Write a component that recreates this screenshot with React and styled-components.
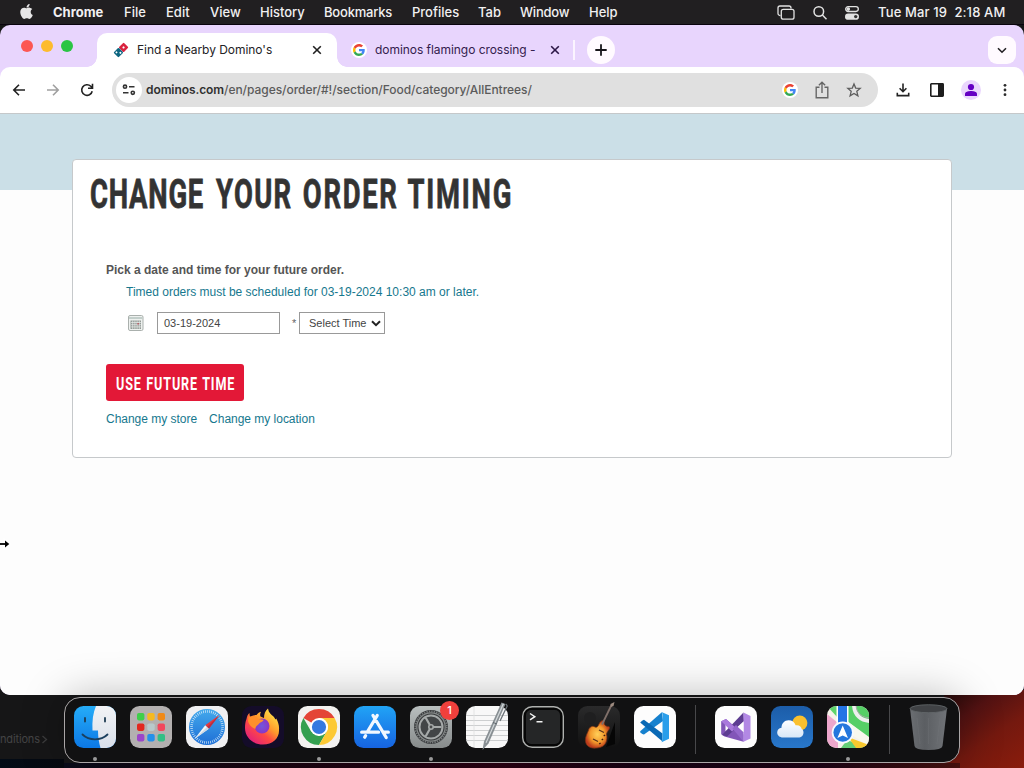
import React from 'react';
import styled, { createGlobalStyle } from 'styled-components';
import { FaApple } from 'react-icons/fa';

const Global = createGlobalStyle`
  *, *::before, *::after { box-sizing: border-box; }
  body { margin: 0; background: #121213; }
`;

const Screen = styled.div`
  position: relative;
  display: flex;
  flex-direction: column;
  width: 1024px;
  height: 768px;
  overflow: hidden;
  font-family: Inter, "Liberation Sans", sans-serif;
  background:
    linear-gradient(90deg, #020b16 0, #06090f 64px, transparent 64px) 0 759px / 100% 9px no-repeat,
    linear-gradient(90deg, transparent 64px, #090b1a 64px, #150713 180px, #1a0412 260px, #2c0113 500px, #190214 640px, #1e0316 820px, #4a110e 960px, transparent 960px) 0 763px / 100% 5px no-repeat,
    linear-gradient(145deg, #1d0807 0, #521212 30%, #74190f 60%, #8a1c0c 100%) 944px 690px / 80px 78px no-repeat,
    linear-gradient(#161617, #161617);
`;

/* ---------- menu bar ---------- */

const MenuBar = styled.header`
  display: flex;
  align-items: center;
  flex: 0 0 25px;
  padding: 0 0 1px 19px;
  background: #211f21;
  border-bottom: 1px solid #09030d;
  color: #f1f0f1;
  font-size: 13px;
`;
const AppleMark = styled(FaApple)`
  width: 15px;
  height: 17px;
  margin-right: 19px;
  color: #e7e6e7;
`;
const MenuItem = styled.span`
  flex: 0 0 ${p => p.$w}px;
  white-space: nowrap;
  font-weight: ${p => (p.$bold ? 700 : 500)};
  letter-spacing: ${p => p.$ls || 0}px;
`;
const MenuStatus = styled.div`
  display: flex;
  align-items: center;
  margin-left: auto;
  gap: 14px;
  padding-right: 19px;
  svg { margin-top: 2px; margin-left: -1px; margin-right: 1px; }
`;
const Clock = styled.span`
  width: 128px;
  margin-right: -1px;
  margin-left: 4px;
  white-space: pre;
  font-weight: 500;
  letter-spacing: 0.14px;
`;

/* ---------- browser window ---------- */

const Window = styled.main`
  display: flex;
  flex-direction: column;
  flex: 0 0 670px;
  overflow: hidden;
  border-radius: 10px;
  background: #e8d5fd;
`;
const TabStrip = styled.div`
  display: flex;
  align-items: flex-start;
  flex: 0 0 42px;
  padding: 8px 8px 0 21px;
`;
const Lights = styled.div`
  display: flex;
  gap: 8px;
  width: 76px;
  padding-top: 7px;
`;
const Light = styled.i`
  width: 12px;
  height: 12px;
  border-radius: 50%;
  background: ${p => p.$c};
`;
const Tab = styled.div`
  position: relative;
  display: flex;
  align-items: center;
  height: 34px;
  width: ${p => p.$w}px;
  padding: 0 ${p => (p.$active ? 15 : 13)}px 0 ${p => (p.$active ? 16 : 14)}px;
  border-radius: 10px 10px 0 0;
  background: ${p => (p.$active ? '#fff' : 'transparent')};
  color: ${p => (p.$active ? '#242225' : '#34204d')};
  font-size: 12px;
  &::before, &::after {
    content: ${p => (p.$active ? '""' : 'none')};
    position: absolute;
    bottom: 0;
    width: 10px;
    height: 10px;
  }
  &::before { left: -10px; background: radial-gradient(circle at 0 0, transparent 9.5px, #fff 10px); }
  &::after { right: -10px; background: radial-gradient(circle at 100% 0, transparent 9.5px, #fff 10px); }
`;
const TabTitle = styled.span`
  flex: 1;
  margin-left: 8px;
  padding-bottom: 2px;
  overflow: hidden;
  white-space: nowrap;
  letter-spacing: ${p => p.$ls}px;
`;
const TabRule = styled.i`
  width: 2px;
  height: 20px;
  margin: 7px 12px 0 0;
  background: #fbf4ff;
`;
const RoundButton = styled.span`
  display: grid;
  place-items: center;
  width: 28px;
  height: 28px;
  margin-top: 3px;
  margin-left: ${p => (p.$end ? 'auto' : 0)};
  border-radius: ${p => (p.$end ? 9 : 14)}px;
  background: #fffaff;
`;
const Toolbar = styled.div`
  display: flex;
  align-items: center;
  flex: 0 0 47px;
  padding: 0 9px;
  border-bottom: 1px solid #c5c8ca;
  border-radius: 10px 10px 0 0;
  background: #fff;
`;
const ToolIcon = styled.span`
  display: grid;
  place-items: center;
  flex: 0 0 20px;
  height: 20px;
  margin-right: ${p => p.$gap ?? 14}px;
`;
const Omnibox = styled.div`
  display: flex;
  align-items: center;
  flex: 0 0 766px;
  height: 34px;
  margin: 0 15px 0 1px;
  padding-left: 4px;
  border-radius: 17px;
  background: #e0e0e0;
`;
const SiteChip = styled.span`
  display: grid;
  place-items: center;
  width: 26px;
  height: 26px;
  margin-right: 4px;
  border-radius: 50%;
  background: #fff;
`;
const Url = styled.span`
  flex: 1;
  padding-bottom: 1px;
  color: #5b5b5b;
  font-size: 12px;
  font-weight: 500;
  letter-spacing: -0.045px;
  b { color: #303030; font-weight: 600; letter-spacing: -0.08px; }
`;

/* ---------- page ---------- */

const Page = styled.div`
  flex: 1;
  padding: 45px 72px 0;
  background: linear-gradient(#cbdfe7 0 76px, #fdfdfd 76px);
  font-family: "Liberation Sans", Arial, sans-serif;
  font-size: 12px;
`;
const Card = styled.section`
  height: 299px;
  padding: 17px 17px 0;
  border: 1px solid #c6c9cb;
  border-radius: 4px;
  background: #fff;
`;
const Heading = styled.h1`
  display: flex;
  width: 700px;
  height: 34px;
  margin: 0;
  color: #333;
  font: 700 41.5px/34px Roboto, sans-serif;
  -webkit-text-stroke: 0.8px #333;
  transform: scaleX(0.66);
  transform-origin: 0 50%;
  white-space: nowrap;
`;
const HeadingWord = styled.span`
  flex: 0 0 ${p => p.$w}px;
  letter-spacing: ${p => p.$ls}px;
`;
const Form = styled.div`
  display: flex;
  flex-direction: column;
  align-items: flex-start;
  padding: 51px 0 0 16px;
`;
const Lead = styled.p`
  height: 16px;
  margin: 0;
  color: #555;
  font-weight: 700;
  line-height: 16px;
`;
const Notice = styled.p`
  height: 16px;
  margin: 6px 0 0 20px;
  color: #16788e;
  line-height: 16px;
`;
const Fields = styled.div`
  display: flex;
  align-items: center;
  height: 22px;
  margin: 12px 0 0 22px;
  color: #444;
  font-size: 11px;
`;
const DateField = styled.span`
  width: 123px;
  height: 22px;
  margin-left: 13px;
  padding-left: 6px;
  border: 1px solid #999;
  line-height: 20px;
`;
const Star = styled.span`
  width: 7px;
  margin-left: 12px;
  color: #666;
`;
const TimeSelect = styled.span`
  display: flex;
  align-items: center;
  justify-content: space-between;
  width: 86px;
  height: 22px;
  padding: 0 3px 0 9px;
  border: 1px solid #999;
`;
const Submit = styled.button`
  width: 138px;
  height: 37px;
  margin: 30px 0 0;
  padding: 1px 0 0 10px;
  border: 0;
  border-radius: 3px;
  background: #e31837;
  color: #fff;
  text-align: left;
  span {
    display: block;
    font: 700 18px/37px Roboto, sans-serif;
    letter-spacing: 1.2px;
    word-spacing: 1px;
    white-space: nowrap;
    transform: scaleX(0.7);
    transform-origin: 0 50%;
  }
`;
const Links = styled.nav`
  display: flex;
  gap: 12px;
  margin-top: 10px;
  color: #16788e;
  line-height: 16px;
  letter-spacing: -0.02px;
`;

/* ---------- dock ---------- */

const DockArea = styled.footer`
  display: flex;
  align-items: flex-start;
  flex: 1;
  padding-top: 2px;
`;
const Backdrop = styled.span`
  display: flex;
  flex: 0 0 64px;
  align-items: center;
  padding-top: 35px;
  color: #444445;
  font-size: 11px;
  white-space: nowrap;
  letter-spacing: -0.15px;
  svg { flex: none; margin-left: 1px; }
`;
const Dock = styled.div`
  display: flex;
  align-items: flex-start;
  gap: 14px;
  width: 896px;
  height: 66px;
  padding: 8px 9px 0;
  border: 1px solid #aaa6a7;
  border-radius: 16px;
  background: #111112;
  box-shadow: 0 0 44px 0 rgba(0, 0, 0, 0.28);
  z-index: 1;
`;
const DockItem = styled.span`
  position: relative;
  flex: 0 0 42px;
  height: 42px;
  svg { display: block; overflow: visible; }
  &::after {
    content: ${p => (p.$running ? '""' : 'none')};
    position: absolute;
    left: 19px;
    top: 51px;
    width: 4px;
    height: 4px;
    border-radius: 50%;
    background: #9a9a9a;
  }
`;
const Badge = styled.em`
  position: absolute;
  top: -5px;
  right: -7px;
  width: 19px;
  height: 19px;
  border-radius: 50%;
  background: #f0403c;
  color: #fff;
  font: 500 11px/19px Inter, sans-serif;
  text-align: center;
`;
const DockRule = styled.i`
  flex: 0 0 1px;
  height: 49px;
  margin: -1px ${p => (p.$last ? '4px 0 6px' : '5px 0')};
  background: #48484a;
`;
const Cursor = styled.svg`
  position: absolute;
  left: 0;
  top: 537px;
`;

/* ---------- small icons ---------- */

const Close = ({ c }) => (
  <svg width="10" height="10" viewBox="0 0 10 10"><path d="M1.2 1.2 8.8 8.8M8.8 1.2 1.2 8.8" stroke={c} strokeWidth="1.6" /></svg>
);
const Google = ({ s = 14 }) => (
  <svg width={s} height={s} viewBox="0 0 48 48">
    <path fill="#EA4335" d="M24 9.5c3.54 0 6.71 1.22 9.21 3.6l6.85-6.85C35.9 2.38 30.47 0 24 0 14.62 0 6.51 5.38 2.56 13.22l7.98 6.19C12.43 13.72 17.74 9.5 24 9.5z" />
    <path fill="#4285F4" d="M46.98 24.55c0-1.57-.15-3.09-.38-4.55H24v9.02h12.94c-.58 2.96-2.26 5.48-4.78 7.18l7.73 6c4.51-4.18 7.09-10.36 7.09-17.65z" />
    <path fill="#FBBC05" d="M10.53 28.59c-.48-1.45-.76-2.99-.76-4.59s.27-3.14.76-4.59l-7.98-6.19C.92 16.46 0 20.12 0 24c0 3.88.92 7.54 2.56 10.78l7.97-6.19z" />
    <path fill="#34A853" d="M24 48c6.48 0 11.93-2.13 15.89-5.81l-7.73-6c-2.15 1.45-4.92 2.3-8.16 2.3-6.26 0-11.57-4.22-13.47-9.91l-7.98 6.19C6.51 42.62 14.62 48 24 48z" />
  </svg>
);
const GoogleTab = styled.span`
  display: grid;
  place-items: center;
  width: 16px;
  height: 16px;
  border-radius: 50%;
  background: #fff;
`;
const Domino = () => (
  <svg width="16" height="16" viewBox="0 0 16 16">
    <g transform="rotate(45 8 8)">
      <rect x="4.5" y="0.8" width="7" height="7.1" rx="1" fill="#d9233f" />
      <rect x="4.5" y="8.1" width="7" height="7.1" rx="1" fill="#0c6580" />
      <circle cx="8" cy="4.4" r="1.1" fill="#fff" />
      <circle cx="6.500" cy="12.900" r="1" fill="#fff" /><circle cx="9.600" cy="10.400" r="1" fill="#fff" />
    </g>
  </svg>
);
const Arrow = ({ c, flip }) => (
  <svg width="14" height="14" viewBox="0 0 14 14"><path transform={flip ? 'translate(14 0) scale(-1 1)' : undefined} d="M13 7H2.2M7 1.8 1.8 7 7 12.2" fill="none" stroke={c} strokeWidth="1.6" /></svg>
);

/* ---------- dock icons ---------- */

const Art = ({ children }) => <svg width="42" height="42" viewBox="0 0 42 42">{children}</svg>;
const Tile = ({ fill }) => <rect width="42" height="42" rx="9.5" fill={fill} />;
const Grad = ({ id, a, b }) => (
  <linearGradient id={id} x1="0" y1="0" x2="0" y2="1"><stop stopColor={a} /><stop offset="1" stopColor={b} /></linearGradient>
);

const Finder = () => (
  <Art>
    <defs><Grad id="fi" a="#25acf8" b="#0c78e5" /><Grad id="fw" a="#f2f3f6" b="#d9dfe9" /></defs>
    <Tile fill="url(#fi)" />
    <path d="M22 0H32.500A9.500 9.500 0 0 1 42 9.500V32.500A9.500 9.500 0 0 1 32.500 42H26.500C25 37 24 31 24 24.500H18.500C18 15 19 7 22 0Z" fill="url(#fw)" />
    <path d="M11 12v3.500M31 12v3.500" stroke="#1d3a52" strokeWidth="1.800" strokeLinecap="round" />
    <path d="M8.500 28.500C15 35 27 35 33.500 28.500" fill="none" stroke="#1b3f5e" strokeWidth="1.800" strokeLinecap="round" />
  </Art>
);
const Launchpad = () => {
  const colors = ['#3fcf4a', '#f5b921', '#f08a18', '#e2281f', '#b9c9cb', '#f2485d', '#9b46c9', '#2490ea', '#33bf85'];
  return (
    <Art>
      <Tile fill="#b3b0b0" />
      {colors.map((c, i) => <rect key={i} x={7 + (i % 3) * 10.3} y={7 + Math.floor(i / 3) * 10.5} width="7.400" height="7.400" rx="1.800" fill={c} />)}
    </Art>
  );
};
const Safari = () => (
  <Art>
    <defs><Grad id="sa" a="#43a9ec" b="#1e6fd6" /></defs>
    <Tile fill="#f0f0f2" />
    <circle cx="21" cy="21" r="18" fill="url(#sa)" />
    <circle cx="21" cy="21" r="15.500" fill="none" stroke="#d5e9f8" strokeWidth="2.600" strokeDasharray=".7 1.320" />
    <path d="M33.500 9 19.200 19.200 22.800 22.800Z" fill="#e8383c" />
    <path d="M8.500 33 19.200 19.200 22.800 22.800Z" fill="#f5f5f5" />
    <path d="M33.500 9 21 21 22.800 22.800Z" fill="#b82f45" />
    <path d="M8.500 33 21 21 22.800 22.800Z" fill="#ced9e4" />
  </Art>
);
const Firefox = () => (
  <Art>
    <defs>
      <linearGradient id="ff" x1=".85" y1=".1" x2=".2" y2=".9"><stop stopColor="#ffe045" /><stop offset=".4" stopColor="#ff9a2c" /><stop offset=".65" stopColor="#ff4a43" /><stop offset="1" stopColor="#e52475" /></linearGradient>
      <radialGradient id="fp"><stop stopColor="#7057dc" /><stop offset="1" stopColor="#8c35c4" /></radialGradient>
    </defs>
    <Tile fill="#140c29" />
    <path d="M4.500 13C5 10 6 8 7.500 7c0 2 .3 3 1 4 2-1.500 4-2 6-2 1-1.500 2.500-2.800 4.500-3.300-1 2-1 3.200-.5 4.800L22 12c0-4 1-7 4-9.500.5 4 3 6 5.500 8 1 1 1.500 2 1.800 3l1-1c2 4 3 7 2.700 11C37.500 32 31 38.500 21 38.500 10.500 38.500 3 31 3 22c0-3.500.4-6.500 1.500-9Z" fill="url(#ff)" />
    <circle cx="20" cy="20" r="7.500" fill="url(#fp)" />
    <path d="M6.500 11c4-1.500 7.500-.5 10 2l5 .8c0 2-3.500 2.500-4.500 4-1 1.500-3.500 2-3.500 5C10 22 7 19 6 15Z" fill="#ff8f2a" />
  </Art>
);
const Chrome = () => (
  <Art>
    <Tile fill="#f3f2f0" />
    <path d="M21 21 5.400 12A18 18 0 0 1 36.600 12H21Z" fill="#e44537" />
    <path d="M5.400 12A18 18 0 0 0 21 39L28.800 25.500 21 30 13.200 25.500Z" fill="#34a04f" />
    <path d="M36.600 12A18 18 0 0 1 21 39L28.800 25.500A9 9 0 0 0 21 12Z" fill="#fcc934" />
    <circle cx="21" cy="21" r="9" fill="#fff" />
    <circle cx="21" cy="21" r="7.100" fill="#3478e0" />
  </Art>
);
const AppStore = () => (
  <Art>
    <defs><Grad id="as" a="#21a4f6" b="#1663e0" /></defs>
    <Tile fill="url(#as)" />
    <g stroke="#f2f8ff" strokeWidth="3.300" strokeLinecap="round" fill="none">
      <path d="M19 9.500 32.200 31.500M23.200 9.500 13.600 25.500M11.600 29.700 10.700 31.200M7.700 26.200H24.500M29.500 26.200H34.300" />
    </g>
  </Art>
);
const Settings = () => (
  <Art>
    <defs><Grad id="se" a="#b9bfbf" b="#878b8b" /></defs>
    <Tile fill="url(#se)" />
    <circle cx="21" cy="21" r="17" fill="#393b3d" />
    <circle cx="21" cy="21" r="15.700" fill="none" stroke="#777b7c" strokeWidth="1.800" strokeDasharray="1.300 1.160" />
    <circle cx="21" cy="21" r="14.200" fill="none" stroke="#858989" strokeWidth="1.200" />
    <circle cx="21" cy="21" r="11.500" fill="#424547" stroke="#a5a9a9" strokeWidth="2" />
    <path d="M21 21H31.500M21 21 15.700 11.800M21 21 15.700 30.200" stroke="#a5a9a9" strokeWidth="2.200" />
    <circle cx="21" cy="21" r="3" fill="#a5a9a9" /><circle cx="21" cy="21" r="1.400" fill="#464849" />
  </Art>
);
const TextEdit = () => (
  <Art>
    <Tile fill="#f8f8f8" />
    <path d="M0 9.500H42M0 14.500H42M0 19.500H42M0 24.500H42M0 29.500H42M0 34.500H42" stroke="#c2c4c5" strokeWidth=".8" />
    <path d="M8 1V41" stroke="#dddede" strokeWidth=".8" />
    <path d="M35.500-3.500 39.500-2 22.500 37.500 16.500 44 18 35.500Z" fill="#888f93" />
    <path d="M36.800-2.500 38-2 20.500 37 19.500 36.500Z" fill="#d4d9db" />
    <path d="M40-2 41.200 0 34 15" fill="none" stroke="#6b7277" strokeWidth="1.300" />
    <path d="M27 16.500 31 18" stroke="#5d656a" />
  </Art>
);
const Terminal = () => (
  <Art>
    <rect x=".7" y=".7" width="40.600" height="40.600" rx="9.500" fill="#060606" stroke="#aeb0ae" strokeWidth="1.400" />
    <rect x="4" y="4" width="34" height="34" rx="5" fill="#252627" />
    <path d="M8 7.500 12.800 10.700 8 13.900M14.500 15.800H20.500" fill="none" stroke="#f4f4f4" strokeWidth="1.500" />
  </Art>
);
const Garage = () => (
  <Art>
    <defs>
      <radialGradient id="gb"><stop stopColor="#ffd05a" /><stop offset=".6" stopColor="#f39a2c" /><stop offset="1" stopColor="#bd3c1c" /></radialGradient>
      <Grad id="gt" a="#2a2a2b" b="#111" />
    </defs>
    <Tile fill="url(#gt)" />
    <circle cx="12" cy="12" r="6" fill="#1f1f20" /><path d="M37 16v22l-9 3" fill="#060606" />
    <path d="M11 22.500c2.500-2.600 4-2.600 6-1.500 2 .7 3-.5 4-3 1.500-3.500 4.500-4.500 5.500-2.500-1 3 1 5 4.500 5 2 2-1.500 4-2.500 7.500C30 34 28 41.500 19 42 11 43 6.500 39 7.500 32c1-4 2.500-6 3.500-9.500Z" fill="url(#gb)" stroke="#713013" strokeWidth=".7" />
    <path d="M24 18.500 33.500-1" stroke="#80706a" strokeWidth="1.800" />
    <path d="M32.800 1 32.500-2 36.500-4 35.500 0Z" fill="#9d8b80" />
    <path d="M15 33 20 35.500M21 24l5 2.500" stroke="#59321c" strokeWidth="1.300" />
    <path d="M24 33l.8 1M21.500 37l.8 1M26 29l.8 1" stroke="#401c10" strokeWidth="1.800" />
  </Art>
);
const VsCode = () => (
  <Art>
    <Tile fill="#fdfdfd" />
    <path d="M6.200 25.300 27.800 6.200 29 15 10 28.400Q8.800 28.600 6.300 26.500Z" fill="#1681ce" />
    <path d="M6.200 16.500Q8 14.400 10 13.700L28.500 27.500V35.500Z" fill="#0a69b5" />
    <path d="M27.500 6 35 9.300V32.700L27.500 36.200Q28.500 35 28.500 33V9Q28.500 7 27.500 6Z" fill="#2a9eea" />
  </Art>
);
const VisualStudio = () => (
  <Art>
    <Tile fill="#fdfdfd" />
    <path d="M6.200 15.200 11 13 28.500 28.500V35.700L9.500 30.500 6.200 28.300Z" fill="#8256b8" />
    <path d="M10.500 18 15.500 22 10.500 25.500Z" fill="#fdfdfd" />
    <path d="M7 29 28.500 6.500 29 15 12 30.500Z" fill="#5d3d91" />
    <path d="M6.200 15.200 11 13 21 22 17 25.500Z" fill="#a979dc" />
    <path d="M17.500 22.500 21 19 28.500 26V35.700Z" fill="#9468cb" />
    <path d="M28.500 6.500 35.500 10V32.500L28.500 35.700Z" fill="#b288e4" />
    <path d="M28.500 16V26L23 21Z" fill="#fdfdfd" />
  </Art>
);
const Weather = () => (
  <Art>
    <defs><Grad id="we" a="#1c5da9" b="#2877ca" /><Grad id="cl" a="#fff" b="#d7e7f7" /></defs>
    <Tile fill="url(#we)" />
    <circle cx="28.800" cy="17" r="7.600" fill="#fac02e" />
    <path d="M12 31.500C8.500 31.500 6.200 29.300 6.200 26.500 6.200 24 8 22.200 10.500 21.800 10.500 17.500 13.500 14.300 17.500 14.300 21 14.300 23.700 16.200 24.600 19.300 28.500 18.800 30.500 21 30.700 23 32 23.500 32.500 25 32.500 26.500 32.500 29.500 30.300 31.500 27.200 31.500Z" fill="url(#cl)" />
  </Art>
);
const Maps = () => (
  <Art>
    <defs><clipPath id="mc"><rect width="42" height="42" rx="9.5" /></clipPath></defs>
    <g clipPath="url(#mc)">
      <rect width="42" height="42" fill="#f5f2ea" />
      <path d="M21 0H42V32L20 15Z" fill="#56cf66" />
      <path d="M0 0H11V12Z" fill="#5ed46b" /><path d="M0 8 11 17V42H0Z" fill="#eda7cc" />
      <path d="M20 34 42 42H14Z" fill="#64ce77" /><path d="M20 15 42 31V40L19 25Z" fill="#f8f8ee" />
      <path d="M21 31 29 42H36L42 42V39Z" fill="#f8c82e" />
      <path d="M27-2C27 9 34 15 44 15" fill="none" stroke="#eee" strokeWidth="4" />
      <path d="M29-2C29 8 36 12 44 12" fill="none" stroke="#a4aaa5" strokeWidth="1" />
      <path d="M9.500 0H21.500V20H9.500Z" fill="#fff" /><path d="M11 0H20V20H11Z" fill="#2474e5" />
      <circle cx="15.700" cy="26.500" r="11" fill="#f7faff" /><circle cx="15.700" cy="26.500" r="9.300" fill="#2477dd" />
      <path d="M15.700 19.500 21 32 15.700 29.500 10.400 32Z" fill="#fff" />
    </g>
  </Art>
);
const Trash = () => (
  <Art>
    <defs><linearGradient id="tr"><stop stopColor="#6b6e72" /><stop offset=".4" stopColor="#5b5e62" /><stop offset="1" stopColor="#707377" /></linearGradient></defs>
    <path d="M2 2.500 6.500 40Q7 44 20.500 44T34.500 40L39 2.500Z" fill="url(#tr)" />
    <ellipse cx="20.500" cy="2.700" rx="18.500" ry="4" fill="#404245" stroke="#65696c" strokeWidth=".8" />
    <path d="M9 12 12 38M32 12 29 38M20.500 12V38" stroke="#777a7e" strokeWidth=".7" opacity=".4" />
  </Art>
);

const MENU = [['File', 42], ['Edit', 44], ['View', 50], ['History', 64], ['Bookmarks', 88, -0.2], ['Profiles', 66], ['Tab', 42], ['Window', 69, -0.2], ['Help', 40]];

export default function App() {
  return (
    <Screen>
      <Global />
      <MenuBar>
        <AppleMark />
        <MenuItem $w={71} $bold $ls={0}>Chrome</MenuItem>
        {MENU.map(([t, w, ls]) => <MenuItem key={t} $w={w} $ls={ls}>{t}</MenuItem>)}
        <MenuStatus>
          <svg width="18" height="16" viewBox="0 0 18 16" fill="none" stroke="#e2e2e2" strokeWidth="1.300"><path d="M3.500 10.500H3A2 2 0 0 1 1 8.500V3A2 2 0 0 1 3 1H12A2 2 0 0 1 14 3V3.500" /><rect x="4.300" y="4.300" width="12.700" height="9.900" rx="2" /></svg>
          <svg width="20" height="16" viewBox="0 0 20 16" fill="none" stroke="#e2e2e2" strokeWidth="1.500"><circle cx="9.800" cy="6.500" r="4.800" /><path d="M13.400 10 17.500 14.200" /></svg>
          <svg width="16" height="16" viewBox="0 0 16 16"><g transform="translate(1 0)"><rect x="1.700" y="1.700" width="12.600" height="4.800" rx="2.400" fill="none" stroke="#e2e2e2" strokeWidth="1.300" /><circle cx="4.300" cy="4.100" r="1.800" fill="#e2e2e2" /><rect x="1" y="8.500" width="14" height="6.300" rx="3.150" fill="#e2e2e2" /><circle cx="11.700" cy="11.600" r="1.700" fill="#333" /></g></svg>
          <Clock>Tue Mar 19  2:18 AM</Clock>
        </MenuStatus>
      </MenuBar>

      <Window>
        <TabStrip>
          <Lights><Light $c="#fc5753" /><Light $c="#fdbb2e" /><Light $c="#2ac544" /></Lights>
          <Tab $active $w={240}>
            <Domino />
            <TabTitle $ls={-0.04}>Find a Nearby Domino's</TabTitle>
            <Close c="#202020" />
          </Tab>
          <Tab $w={236}>
            <GoogleTab><Google s={12} /></GoogleTab>
            <TabTitle $ls={-0.05}>dominos flamingo crossing -</TabTitle>
            <Close c="#2c1746" />
          </Tab>
          <TabRule />
          <RoundButton><svg width="12" height="12" viewBox="0 0 12 12"><path d="M6 .3V11.700M.3 6H11.700" stroke="#17151a" strokeWidth="1.800" /></svg></RoundButton>
          <RoundButton $end><svg width="10" height="7" viewBox="0 0 10 7"><path d="M1 1.200 5 5.200 9 1.200" fill="none" stroke="#242225" strokeWidth="1.600" /></svg></RoundButton>
        </TabStrip>

        <Toolbar>
          <ToolIcon><Arrow c="#222" /></ToolIcon>
          <ToolIcon><Arrow c="#a0a0a0" flip /></ToolIcon>
          <ToolIcon><svg width="14" height="14" viewBox="0 0 14 14"><path d="M12.200 8.200A5.300 5.300 0 1 1 10.800 3.300L12.400 4.900M12.500 .8V5.300H8" fill="none" stroke="#222" strokeWidth="1.600" /></svg></ToolIcon>
          <Omnibox>
            <SiteChip><svg width="14" height="12" viewBox="0 0 14 12" fill="none" stroke="#333" strokeWidth="1.600"><circle cx="3" cy="2.700" r="1.600" /><path d="M7 2.700H12.500M1 8.800H6.500" /><circle cx="10.800" cy="8.800" r="1.600" /></svg></SiteChip>
            <Url><b>dominos.com</b>/en/pages/order/#!/section/Food/category/AllEntrees/</Url>
            <ToolIcon $gap={12}><GoogleTab><Google s={12} /></GoogleTab></ToolIcon>
            <ToolIcon $gap={12}><svg width="14" height="18" viewBox="0 0 14 18" fill="none" stroke="#666" strokeWidth="1.400"><path d="M4.500 6.300H1.200V16.700H12.800V6.300H9.500M7 12V1.300M3.900 4.300 7 1.200 10.100 4.300" /></svg></ToolIcon>
            <ToolIcon><svg width="16" height="16" viewBox="0 0 16 16"><path d="M8 1.900 9.700 6.100 14.200 6.400 10.800 9.300 11.900 13.800 8 11.400 4.100 13.800 5.200 9.300 1.800 6.400 6.300 6.100Z" fill="none" stroke="#5d5d5d" strokeWidth="1.300" /></svg></ToolIcon>
          </Omnibox>
          <ToolIcon><svg width="14" height="14" viewBox="0 0 14 14" fill="none" stroke="#222" strokeWidth="1.600"><path d="M7 .5V8.500M3.600 5.300 7 8.700 10.400 5.300M1.300 9.700V12.600H12.700V9.700" /></svg></ToolIcon>
          <ToolIcon><svg width="14" height="14" viewBox="0 0 14 14"><rect x=".8" y=".8" width="12.400" height="12.400" rx=".6" fill="#fff" stroke="#1d1d1d" strokeWidth="1.600" /><path d="M8 1H13V13H8Z" fill="#1d1d1d" /></svg></ToolIcon>
          <ToolIcon><svg width="20" height="20" viewBox="0 0 20 20"><circle cx="10" cy="10" r="10" fill="#ead6fd" /><circle cx="10" cy="7" r="3.100" fill="#6500c3" /><path d="M4 16V14C4 11.800 7.500 11 10 11S16 11.800 16 14V16Z" fill="#6500c3" /></svg></ToolIcon>
          <ToolIcon $gap={0}><svg width="4" height="14" viewBox="0 0 4 14" fill="#2b2b2b"><circle cx="2" cy="2.300" r="1.400" /><circle cx="2" cy="7" r="1.400" /><circle cx="2" cy="11.700" r="1.400" /></svg></ToolIcon>
        </Toolbar>

        <Page>
          <Card>
            <Heading>
              <HeadingWord $w={191} $ls={1.2}>CHANGE</HeadingWord>
              <HeadingWord $w={131.5} $ls={2}>YOUR</HeadingWord>
              <HeadingWord $w={158.5} $ls={2.6}>ORDER</HeadingWord>
              <HeadingWord $w={170} $ls={2.7}>TIMING</HeadingWord>
            </Heading>
            <Form>
              <Lead>Pick a date and time for your future order.</Lead>
              <Notice>Timed orders must be scheduled for 03-19-2024 10:30 am or later.</Notice>
              <Fields>
                <svg width="16" height="16" viewBox="0 0 16 16">
                  <rect x=".5" y=".5" width="14.500" height="15" rx="1.500" fill="#eef1ef" stroke="#aab0ad" />
                  <path d="M1 3H14.500" stroke="#c3cfcb" strokeWidth="2" />
                  <rect x="2.500" y="5.500" width="10.500" height="8.500" fill="#929996" />
                  <path d="M3 7.500H13M3 9.700H13M3 11.900H13M4.700 5.500V14M6.900 5.500V14M9.100 5.500V14M11.300 5.500V14" stroke="#e9eeeb" strokeWidth=".7" />
                  <rect x="9.300" y="8" width="1.800" height="1.500" fill="#b65f68" />
                </svg>
                <DateField>03-19-2024</DateField>
                <Star>*</Star>
                <TimeSelect>Select Time<svg width="10" height="7" viewBox="0 0 10 7"><path d="M1 1.200 5 5.200 9 1.200" fill="none" stroke="#222" strokeWidth="2" /></svg></TimeSelect>
              </Fields>
              <Submit><span>USE FUTURE TIME</span></Submit>
              <Links><span>Change my store</span><span>Change my location</span></Links>
            </Form>
          </Card>
        </Page>
      </Window>

      <DockArea>
        <Backdrop>nditions<svg width="7" height="9" viewBox="0 0 7 9"><path d="M1.500 1 5.500 4.500 1.500 8" fill="none" stroke="#3c3c3d" strokeWidth="1.300" /></svg></Backdrop>
        <Dock>
          <DockItem $running><Finder /></DockItem>
          <DockItem><Launchpad /></DockItem>
          <DockItem><Safari /></DockItem>
          <DockItem><Firefox /></DockItem>
          <DockItem $running><Chrome /></DockItem>
          <DockItem><AppStore /></DockItem>
          <DockItem $running><Settings /><Badge>1</Badge></DockItem>
          <DockItem><TextEdit /></DockItem>
          <DockItem><Terminal /></DockItem>
          <DockItem><Garage /></DockItem>
          <DockItem><VsCode /></DockItem>
          <DockRule />
          <DockItem><VisualStudio /></DockItem>
          <DockItem><Weather /></DockItem>
          <DockItem $running><Maps /></DockItem>
          <DockRule $last />
          <DockItem><Trash /></DockItem>
        </Dock>
      </DockArea>

      <Cursor width="11" height="14" viewBox="0 0 11 14"><path d="M0 7H5.500M5 3.800V10.200L9 7Z" stroke="#fff" strokeWidth="3" fill="#fff" /><path d="M0 7H6" stroke="#000" strokeWidth="1.800" /><path d="M5 3.500 9.300 7 5 10.500Z" fill="#000" /></Cursor>
    </Screen>
  );
}
